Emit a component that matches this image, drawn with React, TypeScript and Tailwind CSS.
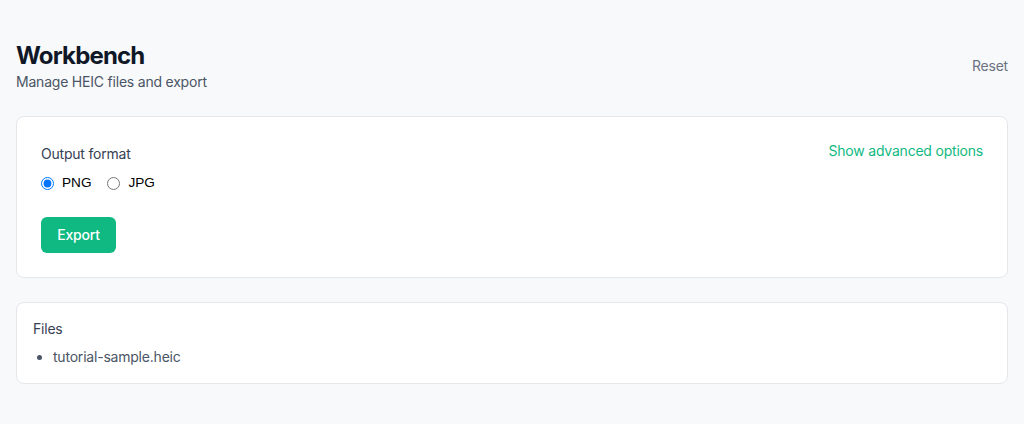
import React from "react";

export default function App() {
  return (
    <div className="min-h-[424px] bg-[#f8f9fb] px-4 pt-10 pb-10 font-['Inter',sans-serif]">
      <div className="flex items-center justify-between">
        <div>
          <h1 className="text-2xl font-bold leading-8 tracking-[-0.035em] text-gray-900">Workbench</h1>
          <p className="text-sm leading-5 tracking-[-0.015em] text-gray-600">Manage HEIC files and export</p>
        </div>
        <button className="text-sm tracking-[-0.015em] text-gray-500">Reset</button>
      </div>

      <div className="mt-6 rounded-lg border border-gray-200 bg-white p-6">
        <div className="flex items-start justify-between">
          <div>
            <div className="mt-[3px] text-sm leading-5 tracking-[-0.015em] text-gray-700">Output format</div>
            <div className="mt-[9px] flex items-center gap-4 text-[13.6px] leading-5 font-['Liberation_Sans',Arial,sans-serif] text-black">
              <label className="flex items-center gap-2">
                <input type="radio" name="fmt" defaultChecked className="h-[13px] w-[13px]" />
                PNG
              </label>
              <label className="flex items-center gap-2">
                <input type="radio" name="fmt" className="h-[13px] w-[13px]" />
                JPG
              </label>
            </div>
          </div>
          <button className="text-sm leading-5 tracking-[-0.015em] text-[#10b981]">Show advanced options</button>
        </div>
        <button className="mt-6 h-9 w-[75px] rounded-md bg-[#10b981] text-sm font-medium tracking-[-0.015em] text-white">
          Export
        </button>
      </div>

      <div className="mt-6 rounded-lg border border-gray-200 bg-white p-4">
        <div className="mb-2 text-sm leading-5 tracking-[-0.015em] text-gray-700">Files</div>
        <ul className="list-disc pl-5 text-sm leading-5 tracking-[-0.015em] text-gray-600">
          <li>tutorial-sample.heic</li>
        </ul>
      </div>
    </div>
  );
}
